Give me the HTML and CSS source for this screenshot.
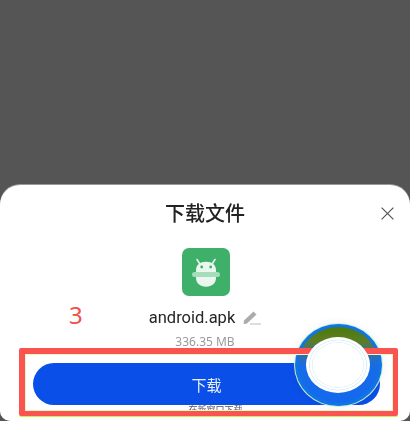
FILE: index.html
```html
<!DOCTYPE html>
<html lang="zh">
<head>
<meta charset="utf-8">
<title>下载文件</title>
<link rel="stylesheet" href="styles.css">
</head>
<body>
<main class="screen">
  <section class="sheet">
    <header class="sheet-head">
      <h1 class="title">下载文件</h1>
      <button class="close" aria-label="关闭">
        <svg viewBox="0 0 13 13" width="13" height="13"><path d="M.6.6 12.4 12.4M12.4.6.6 12.4" fill="none" stroke="#555" stroke-width="1.2"/></svg>
      </button>
    </header>
    <div class="app-icon">
      <svg viewBox="0 0 48 48" width="48" height="48">
        <rect width="48" height="48" rx="7" fill="#3fb069"/>
        <path d="M15 11.500 17.600 15.500M33 11.500 30.400 15.500" stroke="#e6f5ec" stroke-width="1.600" stroke-linecap="round"/>
        <path d="M14 25v-3c0-5 4-8.300 10-8.300s10 3.300 10 8.300v3z" fill="#eaf7ef"/>
        <circle cx="19.700" cy="19" r="1.400" fill="#3fb069"/>
        <circle cx="28.700" cy="19" r="1.400" fill="#3fb069"/>
        <rect x="10" y="24" width="28" height="5" rx="2.500" fill="#a5dcb9"/>
        <path d="M14 29h20v1c0 5-4 8.700-10 8.700S14 35 14 30z" fill="#eaf7ef"/>
      </svg>
    </div>
    <div class="file-row">
      <span class="file-name">android.apk</span>
      <svg class="edit" viewBox="0 0 18 14" width="18" height="14"><path d="M1.500 13 .5 12.500 1 9.500 10.500.5 13.500 3.500 4 12.500z" fill="#ababab"/><path d="M7 13h11" stroke="#c6c6c6" stroke-width="1.200"/></svg>
    </div>
    <p class="file-size">336.35 MB</p>
    <button class="download">下载</button>
    <p class="hint">在新窗口下载</p>
  </section>
  <span class="step">3</span>
  <div class="float-ring"></div>
  <div class="highlight"></div>
  <div class="float-core"></div>
</main>
</body>
</html>
```
FILE: styles.css
```css
* { box-sizing: border-box; }
html, body { margin: 0; padding: 0; }
body { font-family: "Noto Sans CJK SC", "Noto Sans", sans-serif; }
.screen {
  position: relative;
  width: 410px;
  height: 421px;
  overflow: hidden;
  background: #555555;
  display: flex;
  flex-direction: column;
  justify-content: flex-end;
}
.sheet {
  height: 236px;
  background: #fff;
  border-radius: 20px 20px 10px 10px;
  box-shadow: 0 -1px 0 #9a9a9a;
  display: flex;
  flex-direction: column;
  align-items: center;
  filter: blur(0.3px);
}
.sheet-head {
  width: 100%;
  height: 63px;
  padding-top: 14px;
  display: flex;
  justify-content: center;
  position: relative;
}
.title {
  margin: 0;
  font-size: 20px;
  line-height: 28px;
  font-weight: 500;
  color: #222;
}
.close {
  position: absolute;
  right: 16px;
  top: 22px;
  padding: 0;
  border: 0;
  background: none;
  width: 13px;
  height: 13px;
  display: flex;
}
.app-icon { width: 48px; height: 48px; margin-left: 1px; }
.file-row {
  margin-top: 11px;
  height: 22px;
  display: flex;
  align-items: center;
  gap: 8px;
}
.file-name {
  font-family: Roboto, sans-serif;
  font-size: 16.500px;
  line-height: 22px;
  color: #262626;
}
.file-size {
  margin: 4px 0 0;
  font-family: "Noto Sans", sans-serif;
  font-size: 12px;
  line-height: 17px;
  color: #9a9a9a;
}
.download {
  margin: 13px 0 0 3px;
  width: 347px;
  flex: none;
  height: 42px;
  border: 0;
  border-radius: 21px;
  background: #0a4fe8;
  color: #e8effc;
  font-family: inherit;
  font-size: 15px;
  padding: 0;
}
.hint {
  margin: 0 0 0 21px;
  font-size: 9px;
  line-height: 10px;
  color: #555;
}
.step {
  position: absolute;
  left: 69px;
  top: 298px;
  font-family: "Noto Sans", sans-serif;
  font-size: 24px;
  line-height: 34px;
  color: #f2504d;
}
.highlight {
  position: absolute;
  left: 19px;
  top: 348px;
  width: 379px;
  height: 68px;
  border: 6px solid #fb5350;
  border-bottom-width: 5px;
  border-right-width: 5px;
  border-radius: 2px;
  box-shadow: inset 0 0 0 1px #eaf9c4, 0 1px 0 #c4f060;
}
.float-ring {
  position: absolute;
  left: 295px;
  top: 324px;
  width: 87px;
  height: 82px;
  padding: 3px;
  border-radius: 50%;
  background: #0f74e4;
  box-shadow: 0 0 0 1px #c9f1d0, 0 0 6px 4px rgba(0, 0, 0, .03);
}
.float-ring::before {
  content: "";
  display: block;
  height: 100%;
  border-radius: 50%;
  background: linear-gradient(#4a7a08 0, #5d7d24 18%, #2f6fb0 38%, #156ce8 52%, #1468ee 100%);
}
.float-core {
  position: absolute;
  left: 306px;
  top: 337px;
  width: 64px;
  height: 56px;
  border-radius: 50%;
  background: radial-gradient(closest-side, #fff 0 78%, #dff3f8 80%, #fff 83% 87%, #d2edf5 89%, #fff 92%);
}
```
